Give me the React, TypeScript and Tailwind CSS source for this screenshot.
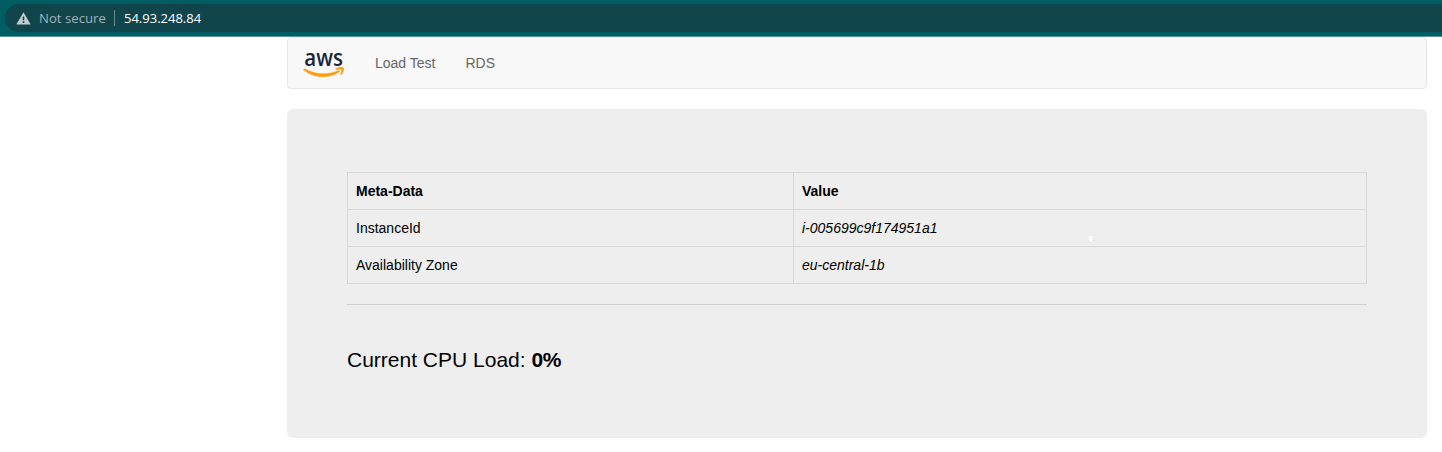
const rows = [
  { name: 'InstanceId', value: 'i-005699c9f174951a1' },
  { name: 'Availability Zone', value: 'eu-central-1b' },
];

function WarningIcon() {
  return (
    <svg className="block h-[13px] w-[15px]" viewBox="0 0 15 13">
      <path d="M7.5 0.3 14.7 12.6H0.3Z" fill="#c3cdcf" />
      <path d="M6.7 4.4h1.6v3.8H6.7zM6.7 9.3h1.6v1.6H6.7z" fill="#10444b" />
    </svg>
  );
}

function AwsLogo() {
  return (
    <svg className="block h-[44px] w-[42px] overflow-visible" viewBox="0 -8 42 44">
      <text
        x="1.3"
        y="16.8"
        textLength="38.6"
        lengthAdjust="spacingAndGlyphs"
        fill="#1b2638"
        className="font-['Open_Sans',sans-serif] text-[23px] leading-none font-semibold"
      >
        aws
      </text>
      <g transform="translate(0 1)" fill="#ff9a0a" stroke="#ff9a0a" strokeWidth="0.4">
        <path d="M0.7 19.2C1 18.8 1.4 18.7 2 19C12.5 24.7 24.5 25.1 35.6 20.7C36.6 20.3 37.3 21.1 36.4 21.8C26.2 29.2 10.6 28.4 0.9 20.1C0.5 19.8 0.5 19.5 0.7 19.2Z" />
        <path d="M33 18.5C35.4 16.9 40 16.9 40.6 17.8C41.1 18.8 40.2 23 38.1 24.7C37.7 25 37.3 24.8 37.5 24.3C38.1 22.9 38.9 20.4 38.4 19.7C37.9 19 35.2 19.2 33.5 19.4C32.8 19.5 32.6 18.9 33 18.5Z" />
      </g>
    </svg>
  );
}

function AddressBar() {
  return (
    <header className="h-[37px] border-b border-[#55989b] bg-[#015d64] pt-1 pl-[5px]">
      <div className="flex h-7 items-center rounded-l-full bg-[#10454c] pl-[11px] font-['Open_Sans',sans-serif] text-[13px] leading-7">
        <WarningIcon />
        <span className="ml-[8px] w-[67px] text-[13.2px] whitespace-nowrap text-[#a0b3b6]">Not secure</span>
        <span className="ml-2 h-4 w-px bg-[#66878b]" />
        <span className="ml-[9px] text-white">54.93.248.84</span>
      </div>
    </header>
  );
}

export default function App() {
  return (
    <div className="h-[452px] overflow-hidden bg-white font-['Liberation_Sans',Arial,sans-serif] text-sm text-black">
      <AddressBar />
      <div className="ml-[287px] w-[1140px]">
        <nav className="flex h-[52px] items-center rounded border border-[#e7e7e7] bg-[#f8f8f8] pl-[15px] text-[#666]">
          <AwsLogo />
          <a className="ml-[30px]">Load Test</a>
          <a className="ml-[30px]">RDS</a>
        </nav>
        <main className="relative mt-5 h-[329px] rounded-md bg-[#eee] px-[60px] pt-[63px]">
          <table className="w-full table-fixed border-collapse text-left leading-5">
            <colgroup>
              <col className="w-[446px]" />
              <col />
            </colgroup>
            <thead>
              <tr className="h-[37px]">
                <th className="border border-[#d9d9d9] px-2 py-0 font-bold">Meta-Data</th>
                <th className="border border-[#d9d9d9] px-2 py-0 font-bold">Value</th>
              </tr>
            </thead>
            <tbody>
              {rows.map((row) => (
                <tr key={row.name} className="h-[37px]">
                  <td className="border border-[#d9d9d9] px-2 py-0">{row.name}</td>
                  <td className="border border-[#d9d9d9] px-2 py-0 italic">{row.value}</td>
                </tr>
              ))}
            </tbody>
          </table>
          <span className="absolute top-[127px] left-[802px] h-[5px] w-[3px] bg-white" />
          <hr className="mt-5 border-[#d0d0d0]" />
          <p className="mt-10 text-[21px] leading-[30px]">
            Current CPU Load: <b className="tracking-[-0.4px]">0%</b>
          </p>
        </main>
      </div>
    </div>
  );
}
